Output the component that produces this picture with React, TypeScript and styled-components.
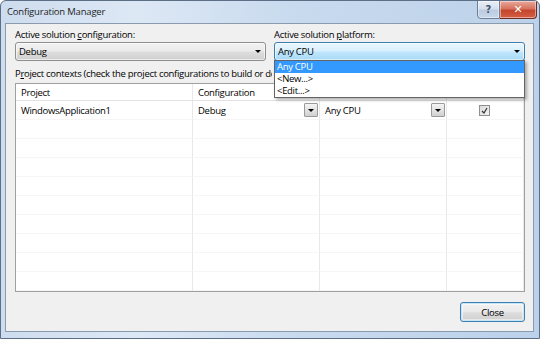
import React from "react";
import styled, { createGlobalStyle } from "styled-components";

const FONT = `"Open Sans", "Noto Sans", sans-serif`;

const Global = createGlobalStyle`
  html, body { margin: 0; padding: 0; background: #ffffff; }
  body { font-family: ${FONT}; font-size: 9.5px; letter-spacing: -0.3px; color: #000; }
  * { box-sizing: border-box; }
`;

const Window = styled.div`
  width: 540px;
  height: 339px;
  display: flex;
  flex-direction: column;
  background: linear-gradient(90deg, #cddcee 0%, #dde8f5 25%, #c8daee 55%, #bcd1ea 100%);
  border: 1px solid #5d6f86;
  border-radius: 6px 6px 0 0;
  overflow: hidden;
`;

const TitleBar = styled.div`
  height: 22px;
  flex: 0 0 22px;
  display: flex;
  justify-content: space-between;
  align-items: flex-start;
  padding-left: 6px;
`;

const Title = styled.div`
  line-height: 22px;
  color: #1e1e1e;
  letter-spacing: -0.2px;
`;

const Captions = styled.div`
  display: flex;
  margin-right: 2px;
  margin-top: -1px;
`;

const CaptionButton = styled.div<{ $close?: boolean }>`
  width: ${(p) => (p.$close ? "37px" : "23px")};
  height: 19px;
  display: flex;
  align-items: center;
  justify-content: center;
  border: 1px solid ${(p) => (p.$close ? "#6e2b21" : "#6d7f95")};
  border-left-width: ${(p) => (p.$close ? "0" : "1px")};
  border-radius: ${(p) => (p.$close ? "0 0 4px 0" : "0 0 0 4px")};
  background: ${(p) =>
    p.$close
      ? "linear-gradient(180deg, #e9a99b 0%, #d7735f 45%, #c4442c 55%, #d45f45 100%)"
      : "linear-gradient(180deg, #e8eef6 0%, #d5e0ee 45%, #bccbe0 55%, #c9d7ea 100%)"};
  color: ${(p) => (p.$close ? "#ffffff" : "#44546a")};
  font-family: "DejaVu Sans", sans-serif;
  font-size: ${(p) => (p.$close ? "11px" : "10px")};
  font-weight: bold;
  letter-spacing: 0;
  box-shadow: inset 0 0 0 1px rgba(255, 255, 255, 0.45);
`;

const Client = styled.div`
  flex: 1;
  min-height: 0;
  margin: 0 5px 6px 4px;
  background: #f0f0f0;
  border: 1px solid #8a9bb0;
  display: flex;
  flex-direction: column;
  padding: 4px 8px 0 9px;
`;

const TopRow = styled.div`
  display: grid;
  grid-template-columns: 251px 251px;
  column-gap: 8px;
`;

const Field = styled.div`
  position: relative;
  display: flex;
  flex-direction: column;
`;

const Label = styled.div`
  line-height: 14px;
  height: 14px;
  white-space: nowrap;
  overflow: hidden;
`;

const Combo = styled.div<{ $focused?: boolean }>`
  height: 19px;
  display: flex;
  align-items: center;
  justify-content: space-between;
  padding: 0 4px 0 3px;
  border: 1px solid ${(p) => (p.$focused ? "#3c7fb1" : "#8e8f8f")};
  border-radius: 3px;
  background: ${(p) =>
    p.$focused
      ? "linear-gradient(180deg, #eaf6fd 0%, #d9f0fc 45%, #bee6fd 55%, #a7d9f5 100%)"
      : "linear-gradient(180deg, #f2f2f2 0%, #ebebeb 45%, #dddddd 55%, #cfcfcf 100%)"};
  box-shadow: inset 0 0 0 1px rgba(255, 255, 255, 0.6);
`;

const Arrow = styled.span`
  width: 0;
  height: 0;
  border-left: 3px solid transparent;
  border-right: 3px solid transparent;
  border-top: 3px solid #000;
`;

const DropList = styled.div`
  position: absolute;
  left: 0;
  right: 0;
  top: 32px;
  background: #ffffff;
  border: 1px solid #646464;
  box-shadow: 2px 2px 3px rgba(0, 0, 0, 0.3);
  z-index: 5;
`;

const DropItem = styled.div<{ $selected?: boolean }>`
  height: 12px;
  line-height: 12px;
  padding-left: 2px;
  background: ${(p) => (p.$selected ? "#3399ff" : "transparent")};
  color: ${(p) => (p.$selected ? "#ffffff" : "#000000")};
`;

const ContextLabel = styled(Label)`
  margin-top: 6px;
  width: 257px;
`;

const Grid = styled.div`
  flex: 1;
  min-height: 0;
  margin-top: 2px;
  background: #ffffff;
  border: 1px solid #a0a0a0;
  display: grid;
  grid-template-columns: 177px 127px 127px 1fr;
  grid-template-rows: 17px;
  grid-auto-rows: 19px;
  align-content: start;
  overflow: hidden;
`;

const HeadCell = styled.div`
  display: flex;
  align-items: center;
  padding-left: 5px;
  border-bottom: 1px solid #e3e3e3;
  border-right: 1px solid #e8e8e8;
`;

const Cell = styled.div<{ $center?: boolean }>`
  display: flex;
  align-items: center;
  justify-content: ${(p) => (p.$center ? "center" : "space-between")};
  padding-left: ${(p) => (p.$center ? "0" : "5px")};
  padding-right: 1px;
  border-bottom: 1px solid #f6f6f6;
  border-right: 1px solid #e8e8e8;
  white-space: nowrap;
`;

const CellButton = styled.div`
  width: 14px;
  height: 14px;
  display: flex;
  align-items: center;
  justify-content: center;
  border: 1px solid #9a9a9a;
  border-radius: 1px;
  background: linear-gradient(180deg, #f4f4f4 0%, #e3e3e3 50%, #d0d0d0 100%);
`;

const Check = styled.div`
  width: 11px;
  height: 11px;
  border: 1px solid #8f8f8f;
  background: linear-gradient(135deg, #dcdcdc 0%, #f2f2f2 100%);
  display: flex;
  align-items: center;
  justify-content: center;
`;

const Footer = styled.div`
  display: flex;
  justify-content: flex-end;
  padding: 10px 0 9px;
`;

const Button = styled.div`
  width: 65px;
  height: 20px;
  display: flex;
  align-items: center;
  justify-content: center;
  border: 1px solid #3c7fb1;
  border-radius: 3px;
  background: linear-gradient(180deg, #f2f2f2 0%, #ebebeb 45%, #dddddd 55%, #cfcfcf 100%);
  box-shadow: inset 0 0 0 1px #c7e6f7, inset 0 0 0 2px rgba(255, 255, 255, 0.5);
`;

const EMPTY_ROWS = 10;

export default function App() {
  return (
    <>
      <Global />
      <Window>
        <TitleBar>
          <Title>Configuration Manager</Title>
          <Captions>
            <CaptionButton>?</CaptionButton>
            <CaptionButton $close>✕</CaptionButton>
          </Captions>
        </TitleBar>
        <Client>
          <TopRow>
            <Field>
              <Label>
                Active solution <u>c</u>onfiguration:
              </Label>
              <Combo>
                <span>Debug</span>
                <Arrow />
              </Combo>
            </Field>
            <Field>
              <Label>
                Active solution <u>p</u>latform:
              </Label>
              <Combo $focused>
                <span>Any CPU</span>
                <Arrow />
              </Combo>
              <DropList>
                <DropItem $selected>Any CPU</DropItem>
                <DropItem>&lt;New...&gt;</DropItem>
                <DropItem>&lt;Edit...&gt;</DropItem>
              </DropList>
            </Field>
          </TopRow>
          <ContextLabel>
            P<u>r</u>oject contexts (check the project configurations to build or deploy):
          </ContextLabel>
          <Grid>
            <HeadCell>Project</HeadCell>
            <HeadCell>Configuration</HeadCell>
            <HeadCell />
            <HeadCell />
            <Cell>WindowsApplication1</Cell>
            <Cell>
              <span>Debug</span>
              <CellButton>
                <Arrow />
              </CellButton>
            </Cell>
            <Cell>
              <span>Any CPU</span>
              <CellButton>
                <Arrow />
              </CellButton>
            </Cell>
            <Cell $center>
              <Check>
                <svg width="7" height="7" viewBox="0 0 7 7">
                  <path d="M1 4 L3 6 L6 1" stroke="#333" strokeWidth="1.2" fill="none" />
                </svg>
              </Check>
            </Cell>
            {Array.from({ length: EMPTY_ROWS * 4 }).map((_, i) => (
              <Cell key={i} />
            ))}
          </Grid>
          <Footer>
            <Button>Close</Button>
          </Footer>
        </Client>
      </Window>
    </>
  );
}
